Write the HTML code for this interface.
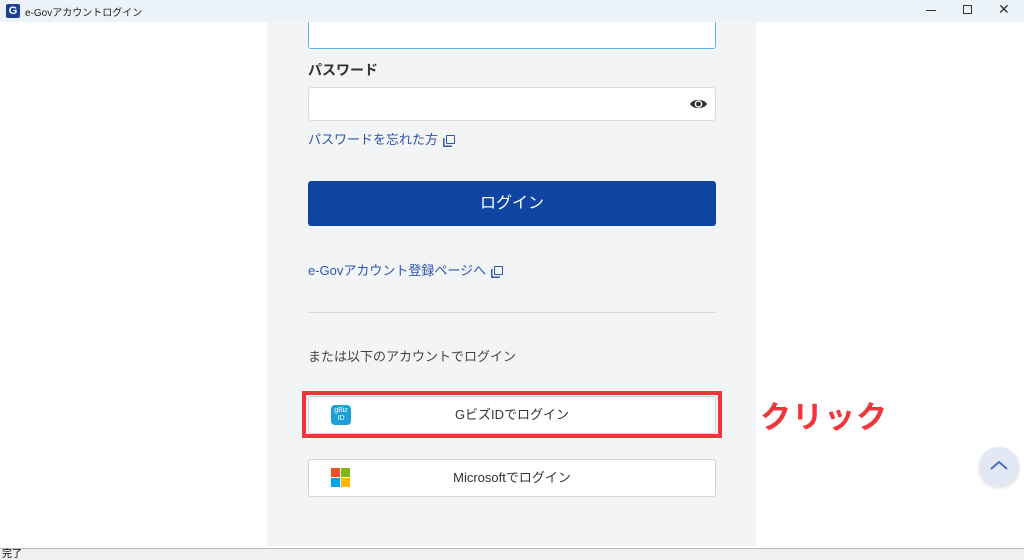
<!DOCTYPE html>
<html><head><meta charset="utf-8"><style>
*{margin:0;padding:0;box-sizing:border-box}
body{width:1024px;height:560px;overflow:hidden;background:#fff;font-family:"Liberation Sans","Noto Sans CJK JP",sans-serif;position:relative}
.abs{position:absolute}
.title{left:0;top:0;width:1024px;height:22px;background:#ecf3f8}
.panel{left:267px;top:22px;width:489px;height:524px;background:#f3f4f6}
.inp{background:#fff;border:1px solid #d8dbe0;border-radius:3px}
.link{color:#2e55b0;font-size:13px}
.btn{background:#fff;border:1px solid #cfd3d8;border-radius:3px;font-size:13px;color:#333;text-align:center;line-height:36px}
</style></head><body>
<div class="abs panel"></div>
<div class="abs inp" style="left:308px;top:10px;width:408px;height:39px;border:1.5px solid #5ab4e6"></div>
<div class="abs title"></div>
<div class="abs" style="left:6px;top:4px;width:14px;height:14px;background:#1f3f94;border-radius:2px;color:#fff;font-size:11px;font-weight:bold;text-align:center;line-height:14px">G</div>
<div class="abs" style="left:25px;top:4px;font-size:10px;color:#222">e-Govアカウントログイン</div>
<div class="abs" style="left:926px;top:10px;width:10px;height:1px;background:#333"></div>
<div class="abs" style="left:963px;top:5px;width:9px;height:9px;border:1px solid #333"></div>
<div class="abs" style="left:998px;top:1px;font-size:14px;color:#333">✕</div>
<div class="abs" style="left:308px;top:60px;font-size:14px;font-weight:bold;color:#333">パスワード</div>
<div class="abs inp" style="left:308px;top:87px;width:408px;height:34px"></div>
<svg class="abs" style="left:689px;top:97px" width="19" height="14" viewBox="0 0 19 14"><path d="M1 7C4 1.5 15 1.5 18 7C15 12.5 4 12.5 1 7Z" fill="#333"/><circle cx="9.5" cy="7" r="3.8" fill="#fff"/><circle cx="9.5" cy="7" r="2.4" fill="#333"/></svg>
<div class="abs link" style="left:308px;top:129px">パスワードを忘れた方 <span style="display:inline-block;width:9px;height:9px;border:1.5px solid #2e55b0;border-radius:1px;margin-left:4px;box-shadow:-2px 2px 0 -0.5px #f3f4f6,-3px 3px 0 0 #2e55b0"></span></div>
<div class="abs" style="left:308px;top:181px;width:408px;height:45px;background:#0f44a3;border-radius:3px;color:#fff;font-size:16px;text-align:center;line-height:45px">ログイン</div>
<div class="abs link" style="left:308px;top:260px">e-Govアカウント登録ページへ <span style="display:inline-block;width:9px;height:9px;border:1.5px solid #2e55b0;border-radius:1px;margin-left:4px;box-shadow:-2px 2px 0 -0.5px #f3f4f6,-3px 3px 0 0 #2e55b0"></span></div>
<div class="abs" style="left:308px;top:312px;width:408px;height:1px;background:#d6d8dd"></div>
<div class="abs" style="left:308px;top:346px;font-size:13px;color:#444">または以下のアカウントでログイン</div>
<div class="abs btn" style="left:308px;top:396px;width:408px;height:38px">GビズIDでログイン</div>
<div class="abs" style="left:302px;top:391px;width:420px;height:47px;border:4px solid #f2353a"></div>
<div class="abs" style="left:331px;top:405px;width:20px;height:20px;background:#1da0da;border-radius:4px;color:#fff;font-size:7px;line-height:8px;text-align:center;padding-top:2px">gBiz<br>ID</div>
<div class="abs" style="left:760px;top:392px;font-size:31px;font-weight:bold;color:#f2353a;letter-spacing:1px">クリック</div>
<div class="abs btn" style="left:308px;top:459px;width:408px;height:38px">Microsoftでログイン</div>
<div class="abs" style="left:331px;top:468px;width:9px;height:9px;background:#f25022"></div>
<div class="abs" style="left:341px;top:468px;width:9px;height:9px;background:#7fba00"></div>
<div class="abs" style="left:331px;top:478px;width:9px;height:9px;background:#00a4ef"></div>
<div class="abs" style="left:341px;top:478px;width:9px;height:9px;background:#ffb900"></div>
<div class="abs" style="left:979px;top:447px;width:40px;height:40px;border-radius:50%;background:#e1e8f4;box-shadow:0 1px 3px rgba(0,0,0,.15)"></div>
<svg class="abs" style="left:989px;top:459px" width="20" height="12"><path d="M2 10L10 3L18 10" stroke="#4a70c0" stroke-width="2" fill="none"/></svg>
<div class="abs" style="left:0;top:548px;width:1024px;height:12px;background:#f0f0f0;border-top:1px solid #bbb;font-size:10px;line-height:11px;color:#000;padding-left:2px">完了</div>
</body></html>
